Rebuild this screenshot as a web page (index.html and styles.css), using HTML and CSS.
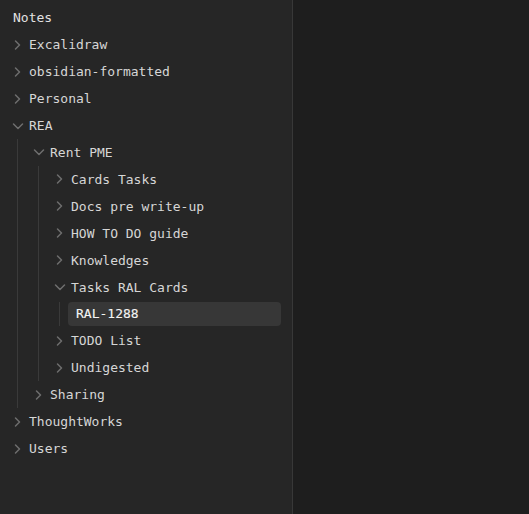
FILE: index.html
```html
<!DOCTYPE html>
<html>
<head>
<meta charset="utf-8">
<link rel="stylesheet" href="styles.css">
</head>
<body>
<div class="app">
  <aside class="sidebar">
    <div class="title">Notes</div>
    <div class="tree">
      <div class="row"><svg class="chev" viewBox="0 0 16 16"><polyline points="5.5,4 9.5,8 5.5,12"/></svg><span>Excalidraw</span></div>
      <div class="row"><svg class="chev" viewBox="0 0 16 16"><polyline points="5.5,4 9.5,8 5.5,12"/></svg><span>obsidian-formatted</span></div>
      <div class="row"><svg class="chev" viewBox="0 0 16 16"><polyline points="5.5,4 9.5,8 5.5,12"/></svg><span>Personal</span></div>
      <div class="row"><svg class="chev" viewBox="0 0 16 16"><polyline points="3.5,6 8,10.5 12.5,6"/></svg><span>REA</span></div>
      <div class="children">
        <div class="row"><svg class="chev" viewBox="0 0 16 16"><polyline points="3.5,6 8,10.5 12.5,6"/></svg><span>Rent PME</span></div>
        <div class="children">
          <div class="row"><svg class="chev" viewBox="0 0 16 16"><polyline points="5.5,4 9.5,8 5.5,12"/></svg><span>Cards Tasks</span></div>
          <div class="row"><svg class="chev" viewBox="0 0 16 16"><polyline points="5.5,4 9.5,8 5.5,12"/></svg><span>Docs pre write-up</span></div>
          <div class="row"><svg class="chev" viewBox="0 0 16 16"><polyline points="5.5,4 9.5,8 5.5,12"/></svg><span>HOW TO DO guide</span></div>
          <div class="row"><svg class="chev" viewBox="0 0 16 16"><polyline points="5.5,4 9.5,8 5.5,12"/></svg><span>Knowledges</span></div>
          <div class="row"><svg class="chev" viewBox="0 0 16 16"><polyline points="3.5,6 8,10.5 12.5,6"/></svg><span>Tasks RAL Cards</span></div>
          <div class="children files">
            <div class="file selected"><span>RAL-1288</span></div>
          </div>
          <div class="row"><svg class="chev" viewBox="0 0 16 16"><polyline points="5.5,4 9.5,8 5.5,12"/></svg><span>TODO List</span></div>
          <div class="row"><svg class="chev" viewBox="0 0 16 16"><polyline points="5.5,4 9.5,8 5.5,12"/></svg><span>Undigested</span></div>
        </div>
        <div class="row"><svg class="chev" viewBox="0 0 16 16"><polyline points="5.5,4 9.5,8 5.5,12"/></svg><span>Sharing</span></div>
      </div>
      <div class="row"><svg class="chev" viewBox="0 0 16 16"><polyline points="5.5,4 9.5,8 5.5,12"/></svg><span>ThoughtWorks</span></div>
      <div class="row"><svg class="chev" viewBox="0 0 16 16"><polyline points="5.5,4 9.5,8 5.5,12"/></svg><span>Users</span></div>
    </div>
  </aside>
  <main class="main"></main>
</div>
</body>
</html>
```

FILE: styles.css
```css
* { box-sizing: border-box; }
html, body {
  margin: 0;
  padding: 0;
  height: 100%;
  background: #1e1e1e;
}
body {
  font-family: "DejaVu Sans Mono", "Liberation Mono", monospace;
  font-size: 13px;
  color: #d6d6d6;
}
.app {
  display: flex;
  height: 514px;
}
.sidebar {
  width: 293px;
  flex: none;
  background: #262626;
  border-right: 1px solid #383838;
  padding-top: 4.3px;
}
.main {
  flex: 1;
  background: #1e1e1e;
}
.title {
  height: 27px;
  display: flex;
  align-items: center;
  padding-left: 13px;
  color: #e2e2e2;
}
.row {
  height: 26.93px;
  display: flex;
  align-items: center;
  padding-left: 10px;
  white-space: nowrap;
}
.chev {
  width: 16px;
  height: 16px;
  flex: none;
  margin-right: 3px;
  fill: none;
  stroke: #6e6e6e;
  stroke-width: 1.5;
  stroke-linecap: round;
  stroke-linejoin: round;
}
.children {
  margin-left: 17px;
  border-left: 1px solid #3a3a3a;
  padding-left: 3px;
}
.files {
  margin-top: 1px;
  margin-bottom: 1px;
  padding-left: 0;
}
.file {
  height: 24.93px;
  display: flex;
  align-items: center;
  margin-left: 8px;
  margin-right: 11px;
  padding-left: 8px;
  border-radius: 4px;
}
.file.selected {
  background: #373737;
  color: #f4f4f4;
  -webkit-text-stroke: 0.1px #f4f4f4;
}
```
